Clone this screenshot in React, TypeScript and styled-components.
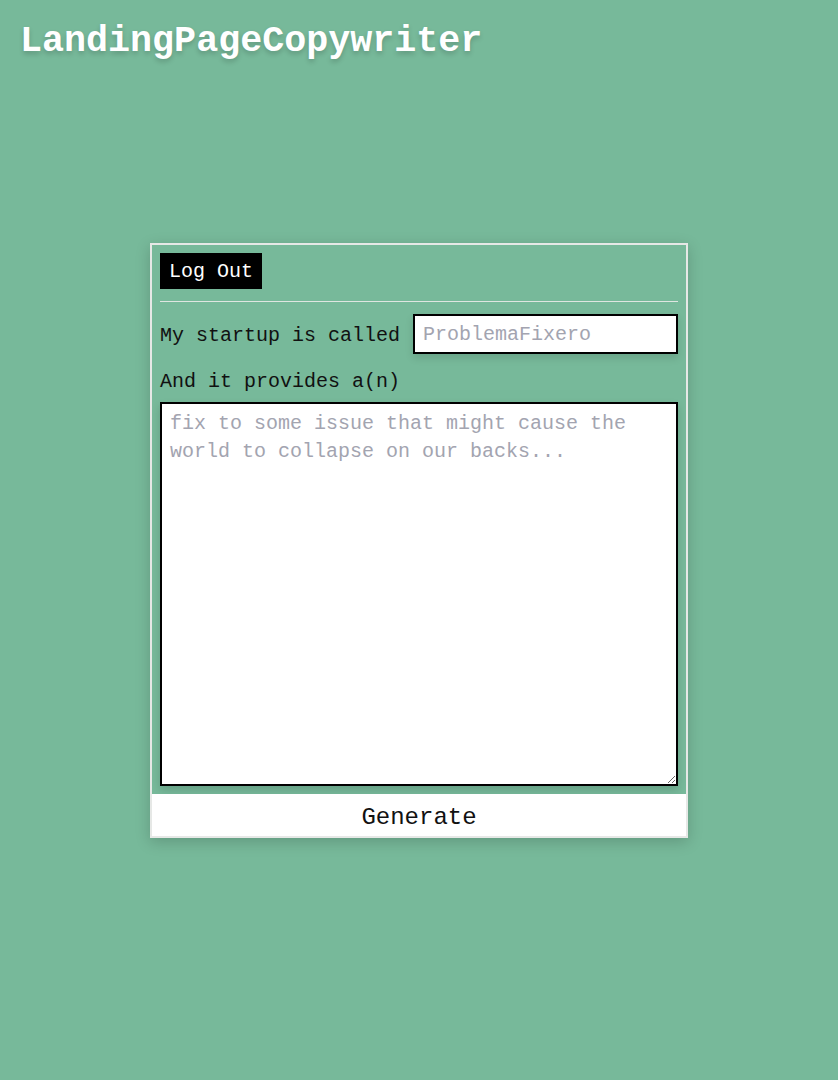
import styled, { createGlobalStyle } from "styled-components";

const GlobalStyle = createGlobalStyle`
  html, body {
    margin: 0;
    padding: 0;
    background: #77b99a;
    min-height: 100%;
  }
  body {
    font-family: "Liberation Mono", "DejaVu Sans Mono", monospace;
    color: #111;
  }
`;

const App = () => {
  return (
    <Page>
      <GlobalStyle />
      <Title>LandingPageCopywriter</Title>
      <Card>
        <div className="card-body">
          <LogOutButton type="button">Log Out</LogOutButton>
          <Divider />
          <NameRow>
            <label htmlFor="startup-name">My startup is called</label>
            <TextInput id="startup-name" placeholder="ProblemaFixero" />
          </NameRow>
          <Label htmlFor="startup-desc">And it provides a(n)</Label>
          <TextArea
            id="startup-desc"
            placeholder="fix to some issue that might cause the world to collapse on our backs..."
          />
        </div>
        <GenerateButton type="button">Generate</GenerateButton>
      </Card>
    </Page>
  );
};

export default App;

const Page = styled.div`
  min-height: 1080px;
  box-sizing: border-box;
  padding: 20px 0 0;
  display: flex;
  flex-direction: column;
`;

const Title = styled.h1`
  margin: 0 0 180px 20px;
  font-size: 36.7px;
  line-height: 43px;
  font-weight: 700;
  color: #fff;
  text-shadow: 0 3px 5px rgba(0, 0, 0, 0.18);
`;

const Card = styled.div`
  align-self: center;
  width: 538px;
  box-sizing: border-box;
  border: 2px solid #e6e8e6;
  box-shadow: 0 4px 14px rgba(0, 0, 0, 0.18);
  display: flex;
  flex-direction: column;

  .card-body {
    padding: 8px;
    display: flex;
    flex-direction: column;
  }
`;

const LogOutButton = styled.button`
  align-self: flex-start;
  height: 36px;
  padding: 0 9px;
  border: none;
  background: #000;
  color: #fff;
  font-family: inherit;
  font-size: 20px;
  cursor: pointer;
`;

const Divider = styled.hr`
  margin: 12px 0 0;
  border: none;
  border-top: 1px solid #dfe6e1;
`;

const NameRow = styled.div`
  margin-top: 12px;
  display: grid;
  grid-template-columns: max-content minmax(0, 1fr);
  align-items: center;
  column-gap: 13px;
  font-size: 20px;

  label {
    white-space: nowrap;
    padding-top: 2px;
  }
`;

const TextInput = styled.input`
  width: 100%;
  min-width: 0;
  height: 40px;
  box-sizing: border-box;
  border: 2px solid #000;
  padding: 0 8px;
  font-family: inherit;
  font-size: 20px;
  color: #111;
  background: #fff;
  outline: none;
  box-shadow: 0 4px 8px rgba(0, 0, 0, 0.12);

  &::placeholder {
    color: #a3a4b0;
  }
`;

const Label = styled.label`
  margin-top: 16px;
  font-size: 20px;
  line-height: 24px;
`;

const TextArea = styled.textarea`
  margin-top: 8px;
  height: 384px;
  box-sizing: border-box;
  border: 2px solid #000;
  padding: 6px 8px;
  font-family: inherit;
  font-size: 20px;
  line-height: 28px;
  color: #111;
  background: #fff;
  outline: none;
  box-shadow: 0 4px 8px rgba(0, 0, 0, 0.14);

  &::placeholder {
    color: #a3a4b0;
  }
`;

const GenerateButton = styled.button`
  height: 42px;
  padding: 4px 0 0;
  border: none;
  background: #fff;
  color: #111;
  font-family: inherit;
  font-size: 24px;
  cursor: pointer;
`;
